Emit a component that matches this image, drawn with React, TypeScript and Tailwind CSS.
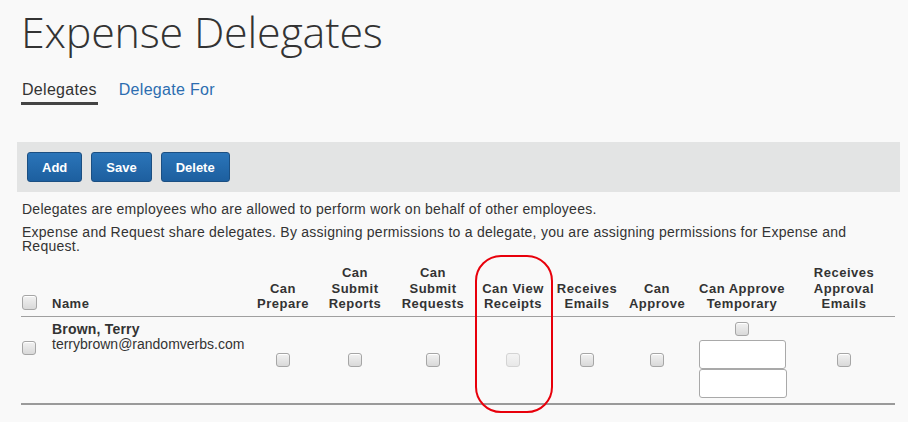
import React from "react"

function Check({ disabled = false, size = "w-[14px] h-[14px]" }: { disabled?: boolean; size?: string }) {
    return (
        <span
            className={
                "inline-block align-middle rounded-[3px] border " +
                size +
                (disabled
                    ? " border-[#d4d4d4] bg-gradient-to-b from-[#f4f4f4] to-[#e8e8e8]"
                    : " border-[#a6a6a6] bg-gradient-to-b from-[#f2f2f2] to-[#d9d9d9] shadow-[inset_0_1px_0_#fff]")
            }
        />
    )
}

const columns = [
    { label: ["Can", "Prepare"], w: "w-[72px]" },
    { label: ["Can", "Submit", "Reports"], w: "w-[72px]" },
    { label: ["Can", "Submit", "Requests"], w: "w-[84px]" },
    { label: ["Can View", "Receipts"], w: "w-[76px]" },
    { label: ["Receives", "Emails"], w: "w-[72px]" },
    { label: ["Can", "Approve"], w: "w-[68px]" },
    { label: ["Can Approve", "Temporary"], w: "w-[102px]" },
    { label: ["Receives", "Approval", "Emails"], w: "w-[102px]" },
]

function ToolButton({ children }: { children: React.ReactNode }) {
    return (
        <button
            type="button"
            className="h-[30px] px-[14px] rounded-[3px] border border-[#1b4f82] bg-gradient-to-b from-[#2b75b9] to-[#1d5f9f] text-white text-[13px] font-bold leading-none"
        >
            {children}
        </button>
    )
}

export default function App() {
    return (
        <div className="min-h-screen bg-[#f9f9f9] text-[#333] font-['Liberation_Sans',Arial,sans-serif]">
            <div className="pl-[21px] pr-[8px] pt-[6px]">
                <h1 className="font-['Open_Sans',sans-serif] font-light text-[43px] leading-[52px] text-[#333] tracking-[-0.2px]">
                    Expense Delegates
                </h1>

                <div className="mt-[23px] flex gap-[21px] text-[16px] leading-[18px] tracking-[0.3px]">
                    <span className="pb-[3px] border-b-[3px] border-[#444] px-[1px]">Delegates</span>
                    <span className="text-[#2c6db0]">Delegate For</span>
                </div>

                <div className="mt-[37px] -ml-[4px] h-[50px] bg-[#e3e4e4] flex items-center gap-[9px] pl-[10px]">
                    <ToolButton>Add</ToolButton>
                    <ToolButton>Save</ToolButton>
                    <ToolButton>Delete</ToolButton>
                </div>

                <p className="mt-[9px] text-[14px] leading-[16px] tracking-[0.25px] pl-[1px]">
                    Delegates are employees who are allowed to perform work on behalf of other employees.
                </p>
                <p className="mt-[8px] text-[14px] leading-[14px] tracking-[0.25px] pl-[1px] pr-[10px]">
                    Expense and Request share delegates. By assigning permissions to a delegate, you are assigning
                    permissions for Expense and Request.
                </p>

                <div className="relative mt-[12px] mr-[5px]">
                    <table className="w-full border-collapse table-fixed">
                        <thead>
                            <tr className="border-b border-[#a0a0a0]">
                                <th className="w-[31px] align-bottom text-left pb-[6px] pl-[1px]">
                                    <div className="flex">
                                        <Check size="w-[15px] h-[15px]" />
                                    </div>
                                </th>
                                <th className="align-bottom text-left pb-[4px] text-[13px] leading-[15.5px] font-bold tracking-[0.5px]">
                                    Name
                                </th>
                                {columns.map((c) => (
                                    <th
                                        key={c.label.join(" ")}
                                        className={c.w + " align-bottom text-center pb-[4px] text-[13px] leading-[15.5px] font-bold tracking-[0.5px] whitespace-nowrap"}
                                    >
                                        {c.label.map((l) => (
                                            <div key={l}>{l}</div>
                                        ))}
                                    </th>
                                ))}
                            </tr>
                        </thead>
                        <tbody>
                            <tr className="border-b-2 border-[#9a9a9a]">
                                <td className="align-top pt-[24px] pl-[1px]">
                                    <div className="flex">
                                        <Check />
                                    </div>
                                </td>
                                <td className="align-top pt-[5px]">
                                    <div className="text-[14px] leading-[15px] font-bold tracking-[0.2px]">Brown, Terry</div>
                                    <div className="text-[14px] leading-[15px]">terrybrown@randomverbs.com</div>
                                </td>
                                <td className="text-center align-middle"><Check /></td>
                                <td className="text-center align-middle"><Check /></td>
                                <td className="text-center align-middle"><Check /></td>
                                <td className="text-center align-middle"><Check disabled /></td>
                                <td className="text-center align-middle"><Check /></td>
                                <td className="text-center align-middle"><Check /></td>
                                <td className="align-middle py-[5px]">
                                    <div className="flex flex-col items-center">
                                        <Check />
                                        <input
                                            type="text"
                                            className="mt-[4px] w-[87px] h-[29px] bg-white border border-[#a9a9a9] rounded-[3px]"
                                        />
                                        <input
                                            type="text"
                                            className="ml-[2px] w-[88px] h-[29px] bg-white border border-[#a9a9a9] rounded-[3px]"
                                        />
                                    </div>
                                </td>
                                <td className="text-center align-middle"><Check /></td>
                            </tr>
                        </tbody>
                    </table>
                    <div className="absolute left-[454px] top-[-10px] w-[78px] h-[158px] border-2 border-[#e8000b] rounded-[26px] pointer-events-none" />
                </div>
            </div>
        </div>
    )
}
